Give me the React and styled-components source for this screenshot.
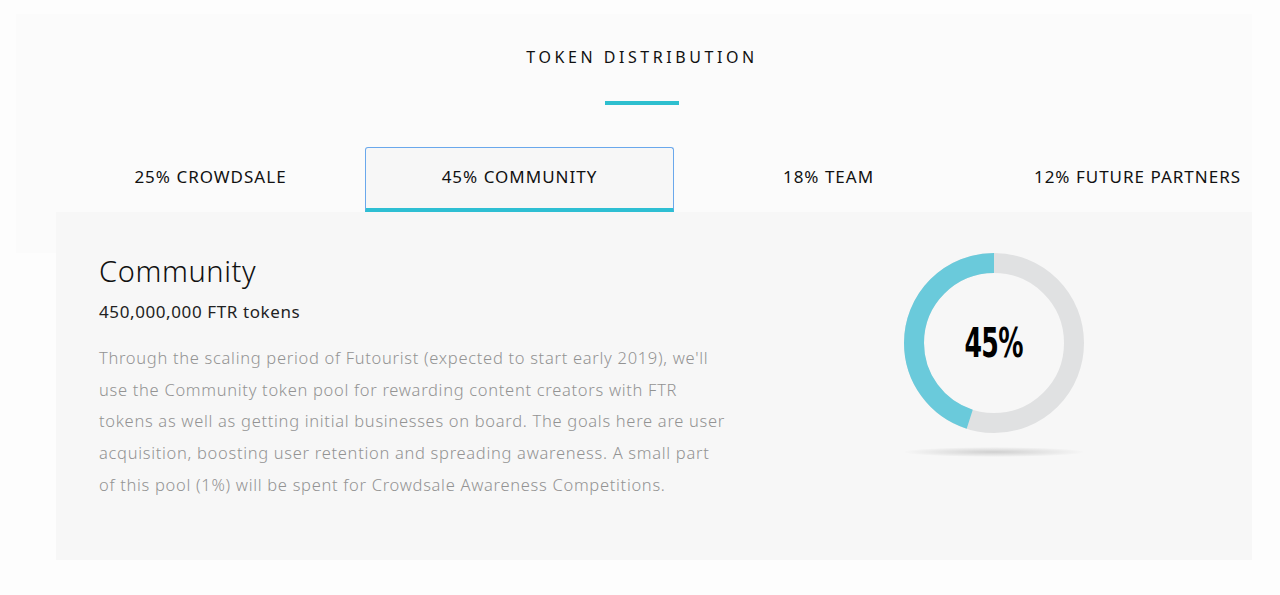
import React, { useState } from "react";
import styled, { createGlobalStyle } from "styled-components";

const GlobalStyle = createGlobalStyle`
  html, body {
    margin: 0;
    padding: 0;
    background: #fdfdfd;
    overflow: hidden;
  }
  body {
    font-family: "Noto Sans", "DejaVu Sans", sans-serif;
    color: #111;
  }
`;

const tabs = [
  {
    id: "crowdsale",
    label: "25% CROWDSALE",
    title: "Crowdsale",
    tokens: "250,000,000 FTR tokens",
    percent: 25,
    text: "",
  },
  {
    id: "community",
    label: "45% COMMUNITY",
    title: "Community",
    tokens: "450,000,000 FTR tokens",
    percent: 45,
    text:
      "Through the scaling period of Futourist (expected to start early 2019), we'll\nuse the Community token pool for rewarding content creators with FTR\ntokens as well as getting initial businesses on board. The goals here are user\nacquisition, boosting user retention and spreading awareness. A small part\nof this pool (1%) will be spent for Crowdsale Awareness Competitions.",
  },
  {
    id: "team",
    label: "18% TEAM",
    title: "Team",
    tokens: "180,000,000 FTR tokens",
    percent: 18,
    text: "",
  },
  {
    id: "partners",
    label: "12% FUTURE PARTNERS",
    title: "Future Partners",
    tokens: "120,000,000 FTR tokens",
    percent: 12,
    text: "",
  },
];

const Section = styled.section`
  width: 1280px;
  height: 595px;
  padding-top: 14px;
  box-sizing: border-box;
`;

const Header = styled.div`
  margin: 0 28px 0 16px;
  padding-left: 16px;
  background: #fbfbfb;
  height: 239px;
  display: flex;
  flex-direction: column;
  align-items: center;
`;

const Title = styled.h2`
  margin: 34px 0 0;
  font-size: 16px;
  font-weight: 400;
  letter-spacing: 3.55px;
  line-height: 18px;
  color: #111;
`;

const Bar = styled.div`
  width: 74px;
  height: 4px;
  background: #2ebfcf;
  margin-top: 35px;
`;

const Main = styled.div`
  margin: -106px 0 0 56px;
`;

const TabRow = styled.div`
  display: flex;
  width: 1236px;
`;

const Tab = styled.button`
  flex: 0 0 309px;
  height: 65px;
  box-sizing: border-box;
  font-family: "Noto Sans", "DejaVu Sans", sans-serif;
  font-size: 17px;
  color: #111;
  letter-spacing: 1px;
  cursor: pointer;
  padding: 0 0 4px;
  background: ${(p) => (p.$active ? "#f7f7f7" : "transparent")};
  border: 1px solid ${(p) => (p.$active ? "#6aa8ec" : "transparent")};
  border-bottom: 4px solid ${(p) => (p.$active ? "#2ebfd3" : "transparent")};
  border-radius: 3px 3px 0 0;
`;

const Panel = styled.div`
  width: 1196px;
  height: 348px;
  background: #f7f7f7;
  display: flex;
  box-sizing: border-box;
  padding: 42px 0 0 43px;
`;

const Info = styled.div`
  width: 640px;
`;

const Name = styled.h3`
  margin: 0;
  font-size: 29px;
  font-weight: 300;
  letter-spacing: 0.6px;
  line-height: 34px;
  color: #111;
`;

const Tokens = styled.div`
  margin-top: 14px;
  font-size: 17px;
  letter-spacing: 0.6px;
  line-height: 20px;
  color: #222;
`;

const Body = styled.p`
  margin: 20px 0 0;
  font-size: 16.5px;
  font-weight: 300;
  letter-spacing: 0.7px;
  line-height: 31.7px;
  color: #939393;
  white-space: pre-line;
`;

const ChartWrap = styled.div`
  margin: -11px 0 0 155px;
  width: 200px;
  display: flex;
  flex-direction: column;
  align-items: center;
`;

const DonutBox = styled.div`
  display: grid;
  width: 200px;
  height: 200px;
  place-items: center;
  & > * {
    grid-area: 1 / 1;
  }
`;

const Percent = styled.span`
  font-family: "DejaVu Sans Condensed", "DejaVu Sans", sans-serif;
  font-weight: 700;
  font-size: 40px;
  line-height: 40px;
  color: #000;
  letter-spacing: -1px;
  transform: scaleX(0.7);
`;

const Shadow = styled.div`
  width: 180px;
  height: 10px;
  margin-top: 4px;
  border-radius: 50%;
  background: radial-gradient(ellipse at center, rgba(0, 0, 0, 0.16) 0%, rgba(0, 0, 0, 0.05) 50%, rgba(0, 0, 0, 0) 72%);
`;

const Donut = ({ percent }) => {
  const r = 80;
  const c = 2 * Math.PI * r;
  const len = (c * percent) / 100;
  return (
    <DonutBox>
      <svg width="200" height="200" viewBox="0 0 200 200">
        <circle cx="100" cy="100" r={r} fill="#f7f7f7" stroke="#e0e1e2" strokeWidth="20" />
        <circle
          cx="100"
          cy="100"
          r={r}
          fill="none"
          stroke="#6acadb"
          strokeWidth="20"
          strokeDasharray={`${len} ${c}`}
          transform="rotate(-90 100 100) scale(1 -1) translate(0 -200)"
        />
      </svg>
      <Percent>{percent}%</Percent>
    </DonutBox>
  );
};

export default function App() {
  const [active, setActive] = useState("community");
  const current = tabs.find((t) => t.id === active);
  return (
    <Section>
      <GlobalStyle />
      <Header>
        <Title>TOKEN DISTRIBUTION</Title>
        <Bar />
      </Header>
      <Main>
        <TabRow>
          {tabs.map((t) => (
            <Tab key={t.id} $active={t.id === active} onClick={() => setActive(t.id)}>
              {t.label}
            </Tab>
          ))}
        </TabRow>
        <Panel>
          <Info>
            <Name>{current.title}</Name>
            <Tokens>{current.tokens}</Tokens>
            <Body>{current.text}</Body>
          </Info>
          <ChartWrap>
            <Donut percent={current.percent} />
            <Shadow />
          </ChartWrap>
        </Panel>
      </Main>
    </Section>
  );
}
